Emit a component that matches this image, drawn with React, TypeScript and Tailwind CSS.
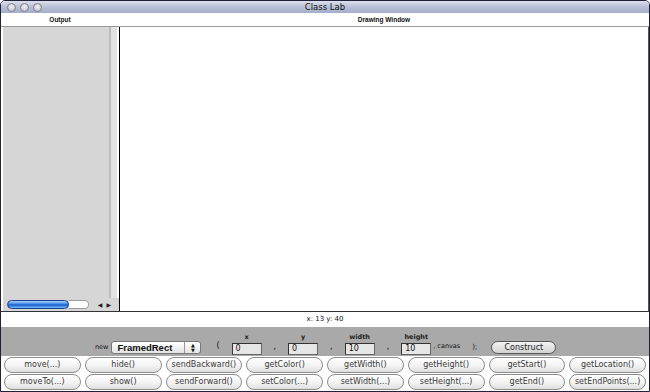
import React from 'react';

const font = { fontFamily: '"DejaVu Sans", "Liberation Sans", sans-serif' };

const rowOne = ['move(...)', 'hide()', 'sendBackward()', 'getColor()', 'getWidth()', 'getHeight()', 'getStart()', 'getLocation()'];
const rowTwo = ['moveTo(...)', 'show()', 'sendForward()', 'setColor(...)', 'setWidth(...)', 'setHeight(...)', 'getEnd()', 'setEndPoints(...)'];

function Pill({ label }: { label: string }) {
  return (
    <div className="h-[16px] flex items-center justify-center rounded-full border border-[#8c8c8c] bg-[linear-gradient(to_bottom,#ffffff,#f3f3f3_55%,#dedede)] text-[8px] text-[#3a3a3a] leading-none">
      {label}
    </div>
  );
}

function Field({ label, value }: { label: string; value: string }) {
  return (
    <div className="flex flex-col items-center gap-[3px]">
      <span className="text-[6.5px] font-bold text-[#222] leading-none">{label}</span>
      <div className="w-[30px] h-[12px] border border-[#666] border-t-[#333] border-l-[#333] bg-[#e6e6e6] text-[8px] leading-[10px] pl-[3px] text-[#111]">
        {value}
      </div>
    </div>
  );
}

export default function App() {
  return (
    <div className="w-[650px] h-[392px] flex flex-col bg-white border border-[#20203a] rounded-t-[5px] overflow-hidden" style={font}>
      {/* title bar */}
      <div className="h-[12px] grid grid-cols-[1fr_auto_1fr] items-center bg-[linear-gradient(to_bottom,#dde1ec,#b9c0d6_50%,#a4adc9)]">
        <div className="flex items-center gap-[4px] pl-[6px]">
          <span className="w-[9px] h-[9px] rounded-full border border-[#7d8290] bg-[radial-gradient(circle_at_50%_35%,#f2f2f4,#b9bcc6)]" />
          <span className="w-[9px] h-[9px] rounded-full border border-[#7d8290] bg-[radial-gradient(circle_at_50%_35%,#f2f2f4,#b9bcc6)]" />
          <span className="w-[9px] h-[9px] rounded-full border border-[#7d8290] bg-[radial-gradient(circle_at_50%_35%,#f2f2f4,#b9bcc6)]" />
        </div>
        <span className="text-[8.5px] text-[#111] leading-none">Class Lab</span>
        <div />
      </div>

      {/* header labels */}
      <div className="h-[14px] flex border-b border-[#9a9a9a] text-[6.5px] font-bold text-[#111]" style={{ fontFamily: '"Liberation Sans", Arial, sans-serif' }}>
        <div className="w-[118px] flex items-center justify-center">Output</div>
        <div className="flex-1 flex items-center justify-center">Drawing Window</div>
      </div>

      {/* main area */}
      <div className="h-[285px] flex border-b border-[#333]">
        <div className="w-[118px] flex flex-col pl-[2px]">
          <div className="flex-1 flex">
            <div className="flex-1 bg-[#d6d6d6]" />
            <div className="w-[2px] bg-[#bdbdbd]" />
            <div className="w-[6px] bg-[#e2e2e2]" />
            <div className="w-[2px] bg-white" />
          </div>
          <div className="h-[13px] flex items-center bg-[#d6d6d6] pl-[4px] pr-[8px]">
            <div className="w-[62px] h-[9px] rounded-full border border-[#1b3f8a] bg-[linear-gradient(to_bottom,#a9d4ff,#3a86e6_45%,#1459c4_55%,#7cc0ff)]" />
            <div className="w-[20px] h-[9px] rounded-r-full bg-white border-y border-r border-[#9a9a9a]" />
            <div className="flex-1 flex items-center justify-end gap-[4px] text-[6px] text-[#222]">
              <span>◀</span>
              <span>▶</span>
            </div>
          </div>
        </div>
        <div className="flex-1 bg-white border-l border-black border-r border-r-[#555]" />
      </div>

      {/* status */}
      <div className="h-[15px] flex items-center justify-center text-[7px] text-[#111]">x: 13 y: 40</div>

      {/* constructor band */}
      <div className="h-[29px] bg-[#a9a9a9] flex items-end pb-[1px] pl-[94px] text-[#111]">
        <span className="text-[6.5px] leading-none mb-[5px] mr-[3px]">new</span>
        <div className="w-[90px] h-[13px] flex rounded-[3px] border border-[#777] bg-[linear-gradient(to_bottom,#ffffff,#e4e4e4)] mb-[1px]">
          <span className="flex-1 text-[9.5px] font-bold leading-[11px] pl-[5px]" style={{ fontFamily: '"Liberation Sans", Arial, sans-serif' }}>FramedRect</span>
          <span className="w-[16px] border-l border-[#999] flex flex-col items-center justify-center text-[5px] leading-[5px]">
            <span>▲</span>
            <span>▼</span>
          </span>
        </div>
        <span className="text-[8px] ml-[15px] mr-[12px] mb-[3px]">(</span>
        <Field label="x" value="0" />
        <span className="text-[8px] mx-[12px] mb-[2px]">,</span>
        <Field label="y" value="0" />
        <span className="text-[8px] mx-[12px] mb-[2px]">,</span>
        <Field label="width" value="10" />
        <span className="text-[8px] mx-[12px] mb-[2px]">,</span>
        <Field label="height" value="10" />
        <span className="text-[6.5px] ml-[2px] mb-[3px]">, canvas</span>
        <span className="text-[7px] ml-[12px] mb-[3px]">);</span>
        <div className="ml-[14px] mb-[1px] w-[65px] h-[13px] rounded-full border border-[#555] bg-[linear-gradient(to_bottom,#f4f4f4,#d2d2d2)] flex items-center justify-center text-[8px] text-[#222]">
          Construct
        </div>
      </div>

      {/* method buttons */}
      <div className="flex-1 grid grid-cols-8 gap-x-[4px] gap-y-[1px] px-[3px] pt-[1px] content-start">
        {rowOne.map((b) => <Pill key={b} label={b} />)}
        {rowTwo.map((b) => <Pill key={b} label={b} />)}
      </div>
    </div>
  );
}
